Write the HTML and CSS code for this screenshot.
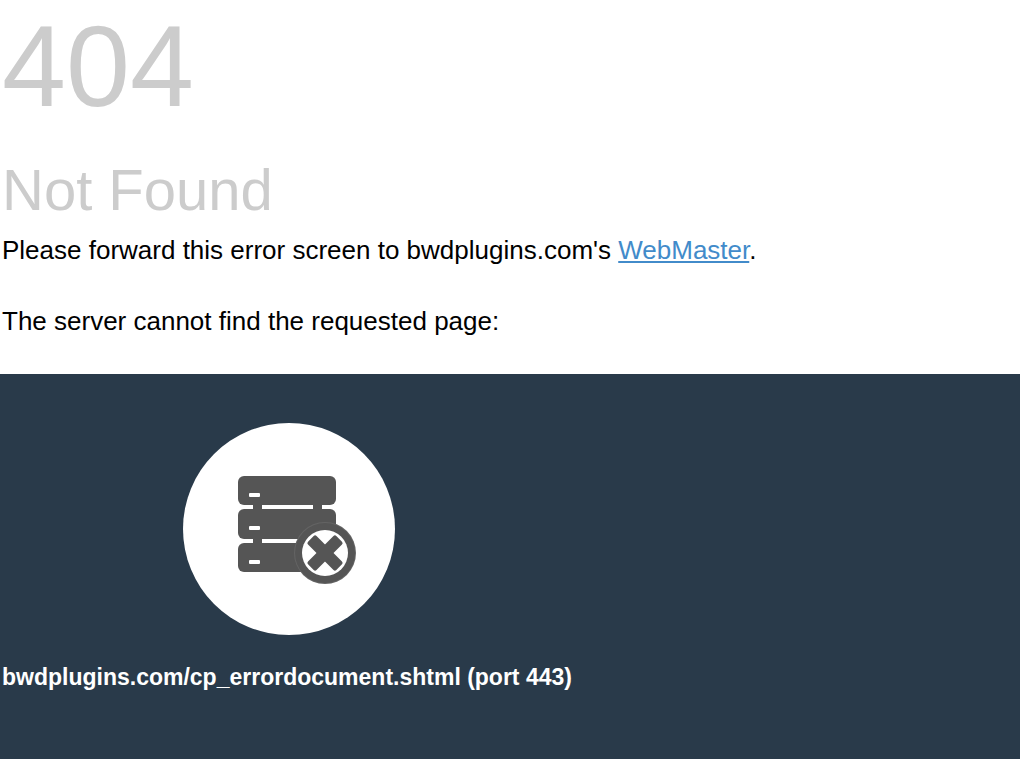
FILE: index.html
```html
<!DOCTYPE html>
<html lang="en">
<head>
    <meta charset="UTF-8">
    <meta name="viewport" content="width=device-width, initial-scale=1.0">
    <title>404 Not Found</title>
    <link rel="stylesheet" href="styles.css">
</head>
<body>

    <main class="container">
        <h1 class="status-code">404</h1>
        <h2 class="status-reason">Not Found</h2>
        <p class="contact-info">Please forward this error screen to bwdplugins.com's <a href="mailto:webmaster@bwdplugins.com">WebMaster</a>.</p>
        <p class="reason-text">The server cannot find the requested page:</p>
    </main>

    <!-- Additional info -->
    <section class="additional-info">
        <svg class="info-image" viewBox="0 0 212 212" aria-hidden="true">
            <circle cx="106" cy="106" r="106" fill="#fff"/>
            <!-- server rack -->
            <g fill="#555">
                <rect x="55" y="53" width="98" height="29" rx="6"/>
                <rect x="55" y="86" width="98" height="30" rx="6"/>
                <rect x="55" y="120" width="98" height="29" rx="6"/>
                <rect x="70" y="80" width="9" height="42"/>
                <rect x="130" y="80" width="9" height="10"/>
            </g>
            <g fill="#fff">
                <rect x="66" y="70" width="11" height="4" rx="1"/>
                <rect x="66" y="103" width="11" height="4" rx="1"/>
                <rect x="66" y="137" width="11" height="4" rx="1"/>
            </g>
            <!-- error badge -->
            <circle cx="142" cy="130" r="31" fill="#646464"/>
            <circle cx="142" cy="130" r="30" fill="#555"/>
            <circle cx="142" cy="130" r="23" fill="#fff"/>
            <g fill="#555" transform="translate(142 130) rotate(45)">
                <rect x="-20" y="-6" width="40" height="12" rx="2"/>
                <rect x="-6" y="-20" width="12" height="40" rx="2"/>
            </g>
        </svg>
        <p class="info-server">bwdplugins.com/cp_errordocument.shtml (port 443)</p>
    </section>

</body>
</html>
```

FILE: styles.css
```css
body {
    margin: 0;
    background: #fff;
    color: #000;
    font-family: Arial, "Liberation Sans", sans-serif;
    font-size: 26px;
    line-height: 36px;
}
h1, h2, p {
    margin: 0;
}
.container {
    padding: 0 2px;
}
.status-code {
    padding-top: 8px;
    color: #ccc;
    font-size: 115px;
    font-weight: normal;
    line-height: 116px;
}
.status-reason {
    padding-top: 32px;
    color: #ccc;
    font-size: 58px;
    font-weight: normal;
    line-height: 68px;
}
.contact-info {
    padding-top: 8px;
}
.contact-info a {
    color: #428bca;
}
.reason-text {
    padding: 35px 0;
}
.additional-info {
    margin-right: 4px;
    padding: 49px 2px 64px;
    background: #293a4a;
    color: #fff;
}
.info-image {
    display: block;
    width: 212px;
    margin-left: 181px;
}
.info-server {
    padding-top: 24px;
    font-size: 23px;
    font-weight: bold;
}
```
